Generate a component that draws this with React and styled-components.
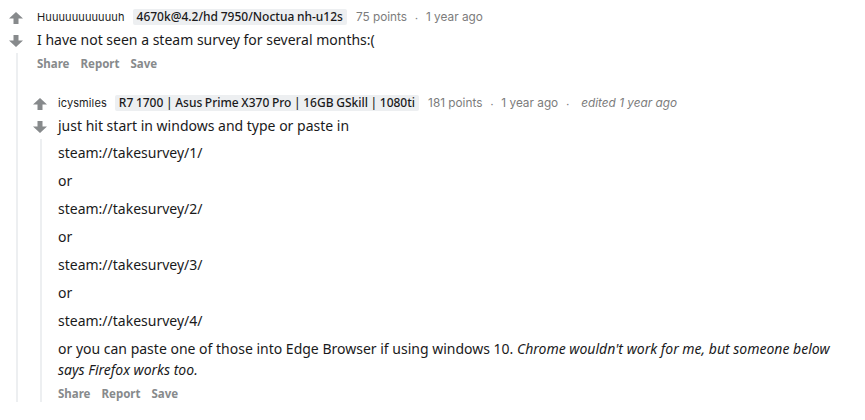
import React from 'react'
import styled, { createGlobalStyle } from 'styled-components'

const GlobalStyle = createGlobalStyle`
  body {
    margin: 0;
    background: #ffffff;
    font-family: "Noto Sans", "DejaVu Sans", sans-serif;
    color: #1a1a1b;
  }
`

const Page = styled.div`
  padding: 7px 0 0 0;
  width: 865px;
  height: 420px;
  overflow: hidden;
  box-sizing: border-box;
`

const CommentWrap = styled.div`
  display: flex;
  margin-left: ${(p) => p.$offset}px;
  margin-top: ${(p) => p.$top}px;
`

const Gutter = styled.div`
  width: 32px;
  flex-shrink: 0;
  display: flex;
  flex-direction: column;
  align-items: center;
`

const Vote = styled.button`
  border: 0;
  background: none;
  padding: 0;
  width: 16px;
  height: 16px;
  display: flex;
  align-items: center;
  justify-content: center;
  margin-top: ${(p) => p.$top}px;
  cursor: pointer;
`

const ThreadLine = styled.div`
  width: 2px;
  flex: 1;
  background: #edeff1;
  margin-top: 4px;
  margin-left: 2px;
`

const Main = styled.div`
  flex: 1;
  margin-left: ${(p) => p.$gap}px;
  min-width: 0;
`

const Header = styled.div`
  display: flex;
  align-items: center;
  height: 20px;
  font-size: 12px;
  white-space: nowrap;
`

const User = styled.span`
  color: #1c1c1c;
  font-family: "Inter", "Noto Sans", sans-serif;
  font-size: 11px;
  letter-spacing: 0.1px;
`

const Flair = styled.span`
  background: #edeff1;
  color: #1a1a1b;
  font-weight: 500;
  font-size: 12px;
  line-height: 16px;
  padding: 0 4px;
  border-radius: 2px;
  margin-left: 8px;
  margin-right: 9px;
  word-spacing: -0.5px;
`

const Meta = styled.span`
  color: #7c7c7c;
  font-family: "Inter", "Noto Sans", sans-serif;
  font-size: 11.8px;
  font-style: ${(p) => (p.$italic ? 'italic' : 'normal')};
  margin-left: ${(p) => (p.$italic ? 4 : 0)}px;
`

const Dot = styled.span`
  color: #7c7c7c;
  font-size: 11px;
  margin: 0 8px;
`

const Body = styled.div`
  font-size: 14px;
  line-height: 21px;
  margin-top: 2px;
  padding-right: 20px;
`

const Para = styled.p`
  margin: ${(p) => (p.$first ? 0 : 7)}px 0 0;
`

const Actions = styled.div`
  display: flex;
  gap: 11px;
  margin-top: 4px;
  height: 18px;
  align-items: center;
  font-size: 11.5px;
  font-weight: 700;
  color: #878a8c;
`

const Action = styled.span`
  cursor: pointer;
`

const Children = styled.div`
  margin-left: -13px;
`

function Arrow({ down }) {
  return (
    <svg width="14" height="12" viewBox="0 0 14 12" style={down ? { transform: 'rotate(180deg)' } : undefined}>
      <path d="M7 0 L14 6.5 L9.5 6.5 L9.5 12 L4.5 12 L4.5 6.5 L0 6.5 Z" fill="#878a8c" />
    </svg>
  )
}

function Comment({ offset = 0, top = 0, gap, user, flair, points, time, edited, children, replies }) {
  return (
    <CommentWrap $offset={offset} $top={top}>
      <Gutter>
        <Vote $top={3}><Arrow /></Vote>
        <Vote $top={7}><Arrow down /></Vote>
        <ThreadLine />
      </Gutter>
      <Main $gap={gap}>
        <Header>
          <User>{user}</User>
          <Flair>{flair}</Flair>
          <Meta>{points} points</Meta>
          <Dot>·</Dot>
          <Meta>{time}</Meta>
          {edited && (
            <>
              <Dot>·</Dot>
              <Meta $italic>edited {edited}</Meta>
            </>
          )}
        </Header>
        <Body>{children}</Body>
        <Actions>
          <Action>Share</Action>
          <Action>Report</Action>
          <Action>Save</Action>
        </Actions>
        {replies && <Children>{replies}</Children>}
      </Main>
    </CommentWrap>
  )
}

export default function App() {
  const reply = (
    <Comment
      top={21}
      gap={2}
      user="icysmiles"
      flair="R7 1700 | Asus Prime X370 Pro | 16GB GSkill | 1080ti"
      points={181}
      time="1 year ago"
      edited="1 year ago"
    >
      <Para $first>just hit start in windows and type or paste in</Para>
      <Para style={{ marginTop: 6 }}>steam://takesurvey/1/</Para>
      <Para>or</Para>
      <Para>steam://takesurvey/2/</Para>
      <Para>or</Para>
      <Para>steam://takesurvey/3/</Para>
      <Para>or</Para>
      <Para>steam://takesurvey/4/</Para>
      <Para>
        or you can paste one of those into Edge Browser if using windows 10.{' '}
        <em>Chrome wouldn't work for me, but someone below says Firefox works too.</em>
      </Para>
    </Comment>
  )

  return (
    <>
      <GlobalStyle />
      <Page>
        <Comment
          gap={5}
          user="Huuuuuuuuuuuh"
          flair="4670k@4.2/hd 7950/Noctua nh-u12s"
          points={75}
          time="1 year ago"
          replies={reply}
        >
          <Para $first>I have not seen a steam survey for several months:(</Para>
        </Comment>
      </Page>
    </>
  )
}
